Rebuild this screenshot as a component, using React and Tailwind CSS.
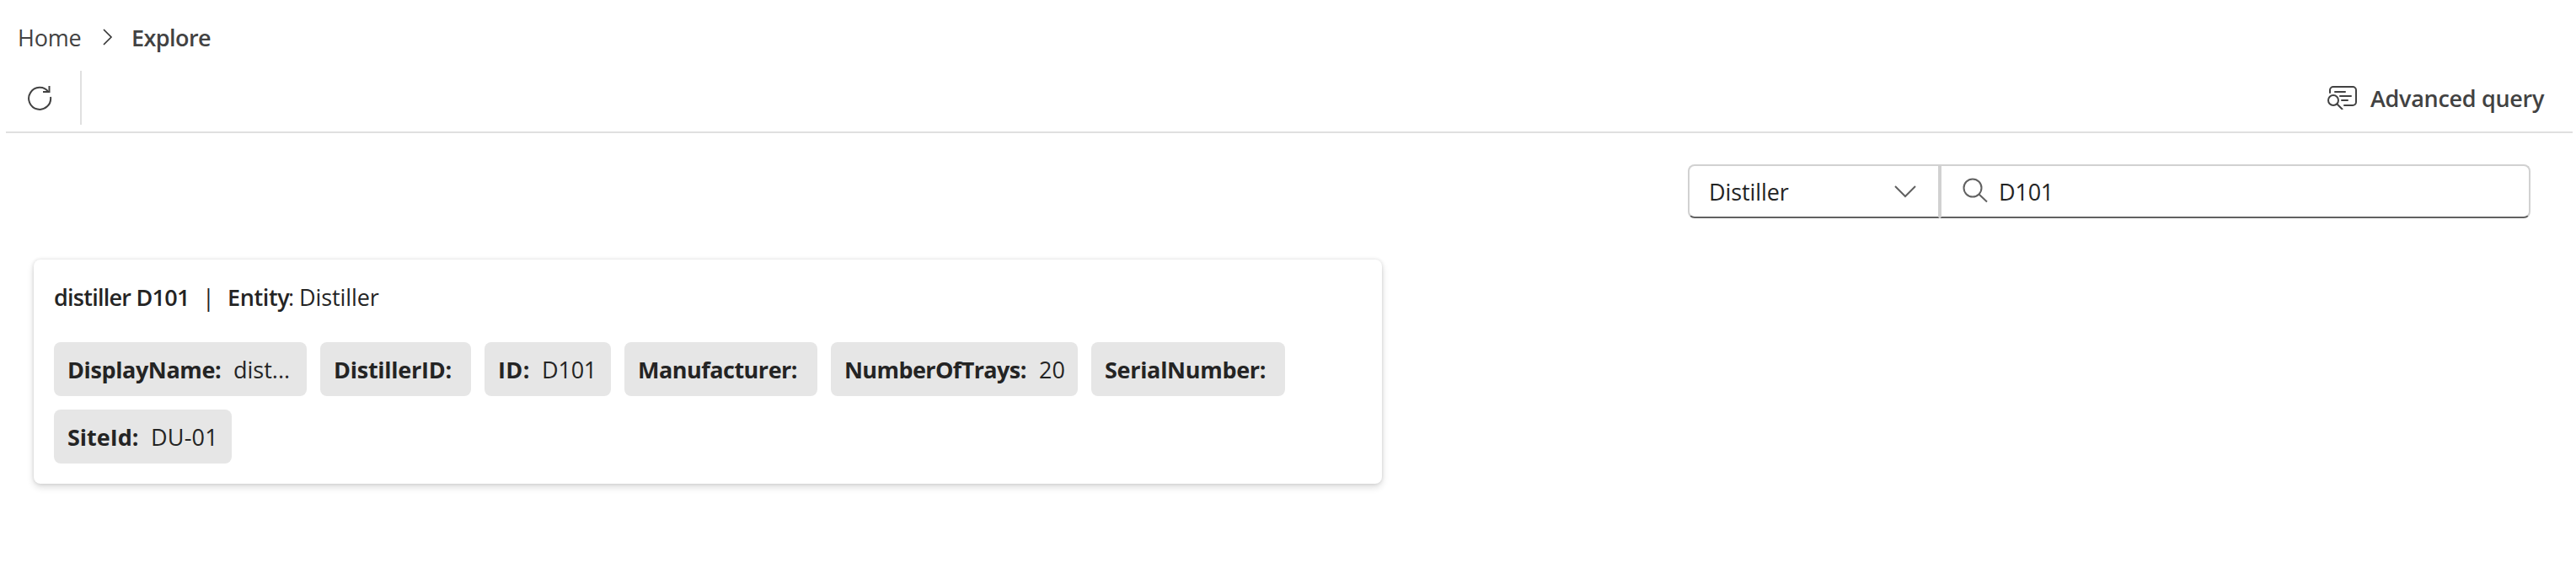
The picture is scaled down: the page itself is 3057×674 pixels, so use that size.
import React from "react";

const rows = [
  [
    { label: "DisplayName:", value: "dist...", chip: "w-[300px]", labelCls: "w-[197px] tracking-[-0.4px]", valueCls: "tracking-[0px]" },
    { label: "DistillerID:", chip: "w-[179px]", labelCls: "w-[147px] tracking-[-0.25px]" },
    { label: "ID:", value: "D101", chip: "w-[150px]", labelCls: "w-[52px] tracking-[0.4px]", valueCls: "tracking-[-0.2px]" },
    { label: "Manufacturer:", chip: "w-[229px]", labelCls: "w-[197px] tracking-[-0.5px]" },
    { label: "NumberOfTrays:", value: "20", chip: "w-[293px]", labelCls: "w-[231px] tracking-[-0.6px]" },
    { label: "SerialNumber:", chip: "w-[230px]", labelCls: "w-[198px] tracking-[-0.3px]" },
  ],
  [
    { label: "SiteId:", value: "DU-01", chip: "w-[211px]", labelCls: "w-[99px] tracking-[0px]", valueCls: "tracking-[0.2px]" },
  ],
];

function Chip({ label, value, chip, labelCls, valueCls }) {
  return (
    <div className={`flex h-16 shrink-0 items-center rounded-lg bg-[#e6e6e6] pt-0.5 pl-4 ${chip}`}>
      <span className={`shrink-0 font-bold ${labelCls}`}>{label}</span>
      {value && <span className={valueCls}>{value}</span>}
    </div>
  );
}

export default function App() {
  return (
    <div className="flex h-[674px] w-full flex-col bg-white font-['Open_Sans',sans-serif] text-[27px] leading-10 whitespace-nowrap text-[#242424]">
      <nav className="flex h-[84px] items-center pt-[6px] pl-[21px] text-[#424242]">
        <span className="w-[101px] tracking-[-0.2px]">Home</span>
        <svg className="mt-[-2px] h-5 w-3" viewBox="0 0 12 20" fill="none" stroke="#333" strokeWidth="1.6">
          <path d="M1 1l9 9-9 9" />
        </svg>
        <span className="ml-[22px] font-semibold tracking-[-0.55px]">Explore</span>
      </nav>

      <div className="ml-[7px] mr-1 flex h-[74px] items-start justify-between border-b-2 border-[#e0e0e0] text-[#424242]">
        <div className="flex h-16 items-center">
          <svg className="mb-0.5 ml-6 h-8 w-8" viewBox="0 0 32 32" fill="none" stroke="currentColor" strokeWidth="2">
            <path d="M29 16A13 13 0 1 1 26.5 10" />
            <path d="M27.5 3v7H20" />
          </svg>
          <span className="ml-8 h-16 w-0.5 bg-[#e0e0e0]" />
        </div>
        <div className="flex h-16 items-center pr-[34px]">
          <svg className="h-7 w-9" viewBox="0 0 36 28" fill="none" stroke="currentColor" strokeWidth="2" strokeLinecap="round">
            <path d="M3 8V5a4 4 0 0 1 4-4h23a4 4 0 0 1 4 4v14a4 4 0 0 1-4 4H20" />
            <circle cx="7" cy="17" r="6" />
            <path d="M11.5 21.5l6 6M9 7h12M15 12h13M17 17h7" />
          </svg>
          <span className="ml-[15px] w-[206px] pt-px font-semibold tracking-[-0.3px]">Advanced query</span>
        </div>
      </div>

      <div className="mt-[37px] mr-[54px] flex h-16 self-end">
        <div className="flex w-[299px] items-center rounded-l-lg border-2 border-[#d1d1d1] border-b-[#616161] pl-[23px]">
          <span className="w-[219px] pt-0.5 tracking-[-0.1px]">Distiller</span>
          <svg className="h-4 w-7" viewBox="0 0 28 16" fill="none" stroke="#616161" strokeWidth="2">
            <path d="M2 2l12 12L26 2" />
          </svg>
        </div>
        <div className="flex w-[701px] items-center rounded-r-lg border-2 border-[#d1d1d1] border-b-[#616161] pl-[25px]">
          <svg className="h-8 w-8" viewBox="0 0 32 32" fill="none" stroke="#616161" strokeWidth="2">
            <circle cx="12" cy="12" r="10.5" />
            <path d="M19.5 19.5l9.5 9" />
          </svg>
          <span className="ml-[11px] pt-0.5 tracking-[-0.2px]">D101</span>
        </div>
      </div>

      <section className="mt-[49px] ml-10 flex h-[266px] w-[1600px] flex-col rounded-lg bg-white pt-[25px] pl-6 shadow-[0_0_4px_rgba(0,0,0,0.12),0_4px_8px_rgba(0,0,0,0.14)]">
        <div className="flex">
          <span className="w-[176px] font-semibold tracking-[-0.75px]">distiller D101</span>
          <span className="w-[30px]">|</span>
          <span className="w-[72px] font-semibold tracking-[-0.35px]">Entity</span>
          <span className="w-[13px]">:</span>
          <span className="tracking-[-0.1px]">Distiller</span>
        </div>
        <div className="mt-[33px] flex flex-col gap-4">
          {rows.map((row, i) => (
            <div key={i} className="flex gap-4">
              {row.map((item) => (
                <Chip key={item.label} {...item} />
              ))}
            </div>
          ))}
        </div>
      </section>
    </div>
  );
}
